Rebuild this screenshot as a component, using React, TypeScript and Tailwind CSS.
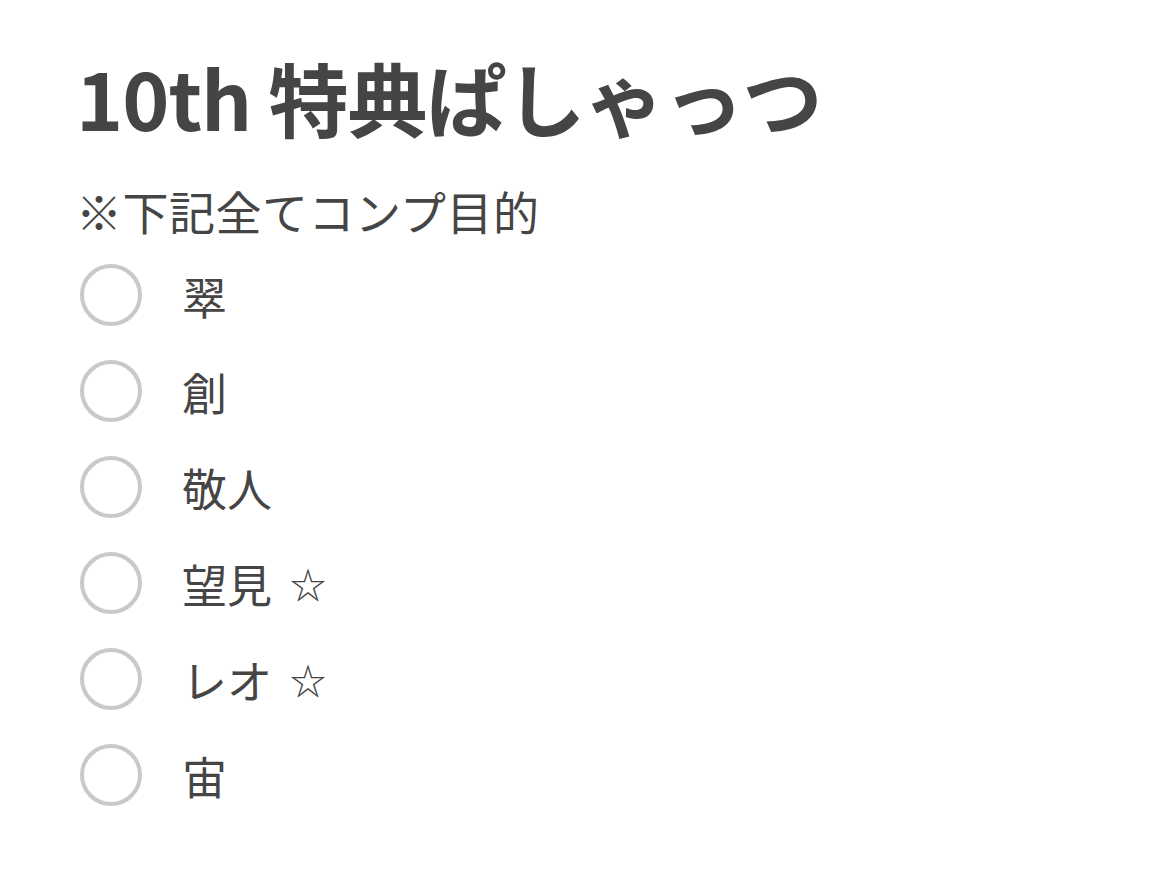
const members = [
  { name: '翠', star: false },
  { name: '創', star: false },
  { name: '敬人', star: false },
  { name: '望見', star: true },
  { name: 'レオ', star: true },
  { name: '宙', star: false },
];

export default function App() {
  return (
    <div
      className="min-h-[882px] w-[1170px] bg-white pl-[76px] pt-[46px] text-[#454545]"
      style={{ fontFamily: '"Noto Sans CJK JP", "Noto Sans", sans-serif' }}
    >
      <h1 className="text-[80px] font-bold leading-[100px] tracking-[-1px]">10th 特典ぱしゃっつ</h1>
      <p className="mt-[34px] text-[46px] leading-[60px] tracking-[0.5px]">※下記全てコンプ目的</p>

      <ul className="mt-[7px] flex flex-col">
        {members.map((m) => (
          <li key={m.name} className="flex h-[96px] items-center">
            <span className="ml-[4px] h-[62px] w-[62px] shrink-0 rounded-full border-[4px] border-[#c9c9c9]" />
            <span className="ml-[40px] flex items-center text-[45px] leading-none">
              {m.name}
              {m.star && <span className="ml-[18px] text-[36px] leading-none">☆</span>}
            </span>
          </li>
        ))}
      </ul>
    </div>
  );
}
